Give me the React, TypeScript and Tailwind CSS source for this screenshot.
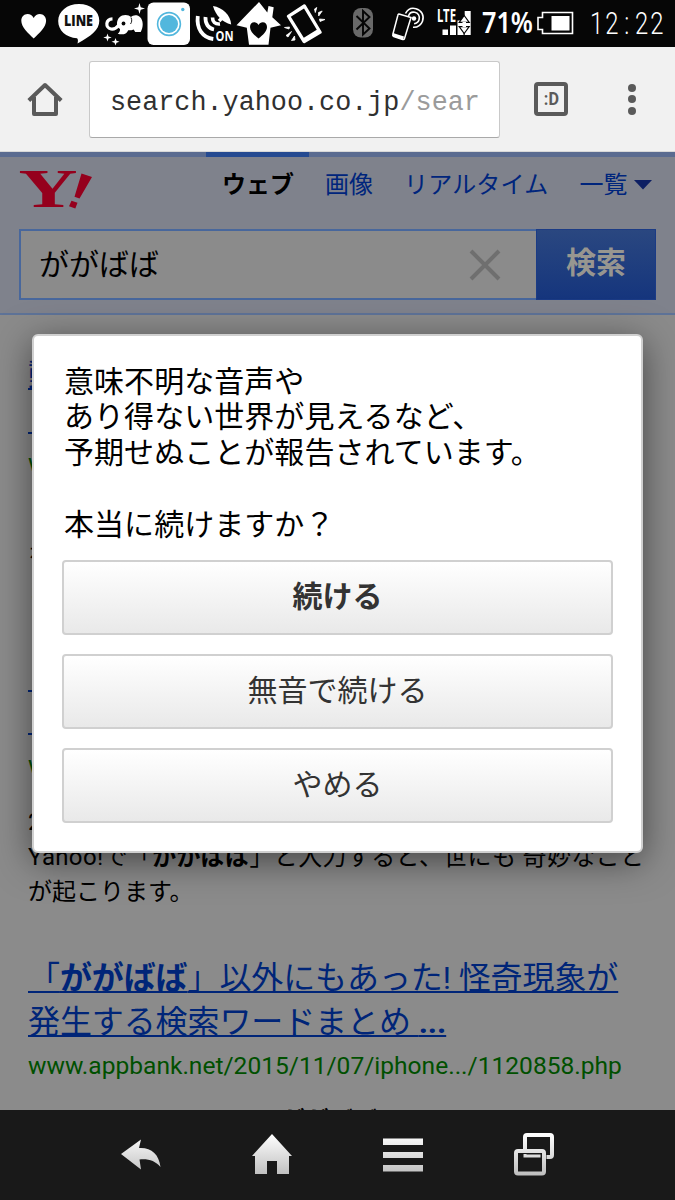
import type { ReactNode } from "react";

const JP = "font-[Roboto,'Noto_Sans_CJK_JP',sans-serif]";

// status bar icons share the bar's own coordinates, x is where the slice starts
function Glyph({ x, w, children }: { x: number; w: number; children: ReactNode }) {
  return (
    <svg width={w} height={47} viewBox={`${x} 0 ${w} 47`} className="shrink-0 overflow-visible" fill="#fff">
      {children}
    </svg>
  );
}

function StatusBar() {
  return (
    <div className="flex h-[47px] shrink-0 items-center bg-[#060606] pl-4 text-white">
      <Glyph x={16} w={38}>
        <path d="M33.7 38.5C28 33 21.3 27 21.3 20.7c0-3.9 2.8-6.7 6.2-6.7 2.7 0 4.8 1.5 6.2 4 1.4-2.5 3.5-4 6.2-4 3.4 0 6.2 2.8 6.2 6.7 0 6.3-6.7 12.3-12.4 17.8z" />
      </Glyph>
      <Glyph x={54} w={50}>
        <path d="M79 4c11.5 0 20.3 7.200 20.3 16.800C99.300 30 91 36 77.500 43.500c.7-2.500.6-4.500-.5-5.200C66 37.500 58.200 30.500 58.200 21 58.200 11.500 67 4 79 4z" />
        <text x={78.500} y={26} fill="#111" fontSize={15} fontWeight={800} textLength={29} lengthAdjust="spacingAndGlyphs" textAnchor="middle" fontFamily="Open Sans, sans-serif">LINE</text>
      </Glyph>
      <Glyph x={104} w={43}>
        <path d="M112.500 18.800c-7 .2-7.500 9-1.500 10.200 4 .7 6-1.500 8-4" fill="none" stroke="#fff" strokeWidth={3.200} />
        <path d="M117 23c.5-5 3.500-8 8.500-8 2.500 0 4.200.7 5.500 2 1.500-1.500 3.500-2.200 5.700-1.700 4 .9 6 5 6 9.200 0 3-.8 5-2 7.500h-5.500l-1.500-2.500c-2 .8-4 1-5.500.8-1 2.200-2.500 3.500-4.500 3.900-2 .3-4 .2-6-.5 1.800-1.200 2.500-2.800 2.300-4.700-2-1-3.200-3.300-3-6z" />
        <path d="M131 17.500c1.200 2.500.8 4.800-.5 6.500" fill="none" stroke="#060606" strokeWidth={0.900} />
        <circle cx={123.500} cy={23.500} r={1.900} fill="#060606" />
        <path d="M139.500 3l1.200 4.300 4.300 1.200-4.300 1.200-1.200 4.300-1.200-4.300-4.300-1.200 4.300-1.200zM107.500 33.500l1 3 3.200 1-3.200 1-1 3-1-3-3.200-1 3.200-1zM115.500 38l1 2.800 3 1-3 1-1 2.600-1-2.600-3-1 3-1z" />
      </Glyph>
      <Glyph x={147} w={44}>
        <rect x={147.500} y={2.500} width={42.500} height={42.500} rx={6} />
        <circle cx={169} cy={24} r={11.400} fill="none" stroke="#52b7dd" strokeWidth={1.600} />
        <circle cx={169} cy={24} r={9} fill="#52b7dd" />
        <circle cx={182.800} cy={9.500} r={1.700} fill="#52b7dd" />
      </Glyph>
      <Glyph x={191} w={44}>
        <path d="M213 6c9.500 1.500 17.500 9 18.200 18.500C222.500 22.500 215.500 15.500 213 6z" />
        <path d="M212.500 17.500c0 4 2.500 7 7.500 6.500M219 21l3-3" fill="none" stroke="#fff" strokeWidth={3.600} />
        <path d="M205.500 17c-.5 6.500 3 11.500 8.500 12.500M197.800 16c-1.500 12.500 4.500 21.500 15.500 23" fill="none" stroke="#fff" strokeWidth={3.800} />
        <text x={215.500} y={41.200} fontSize={14.500} fontWeight={700} textLength={18} lengthAdjust="spacingAndGlyphs" fontFamily="Open Sans, sans-serif">ON</text>
      </Glyph>
      <Glyph x={235} w={48}>
        <path d="M259 2l8.300 10.500L268.500 6l5.200 1.200-1.400 10 8.700 8-10.500 2.500-2 17h-19.500l-2.200-17L236.500 25.200z" />
        <path d="M258.500 38.500c-4.500-3.500-8.500-7.300-8.500-11.500 0-2.800 1.800-4.800 4.200-4.800 1.900 0 3.300 1 4.300 2.800 1-1.800 2.400-2.800 4.300-2.800 2.400 0 4.200 2 4.200 4.800 0 4.200-4 8-8.500 11.500z" fill="#060606" />
      </Glyph>
      <Glyph x={283} w={60}>
        <path fillRule="evenodd" d="M287.500 15l16-10.500c.8-.5 1.700-.3 2.200.5l15.800 26.500c.5.9.3 1.600-.5 2.100l-16 9.400c-.8.500-1.700.2-2.200-.6l-15.700-25.400c-.5-.8-.4-1.500.4-2zM290.800 16.800l13 21 13-8-12.800-21.300z" />
        <path d="M314.500 9l2.300-1.500-1.500 5zM318.500 12.500l3.700-1.500-3.500 5zM319.500 19l5.500.5-5 2zM289.500 27l-5 .5 4.500 1.500zM291.500 31.500l-5.500 4 2 1.500zM294.500 36l-3 4.500 3.500-.5z" stroke="#fff" strokeWidth={0.800} />
      </Glyph>
      <div className="flex-1" />
      <Glyph x={350} w={30}>
        <rect x={353} y={8} width={20} height={29.500} rx={8} fill="#696969" />
        <path d="M356.500 16l13 12.500-6.500 6V11l6.500 6-13 12.500" fill="none" stroke="#060606" strokeWidth={1.900} />
      </Glyph>
      <Glyph x={380} w={54}>
        <circle cx={414} cy={18.500} r={2.200} />
        <path d="M408.500 16c1-3 3.500-4.300 6.300-3.700 3.500.7 5.200 3.800 4.300 7.200-.7 2.500-2.700 4-5 4.300M405.500 13.500c2-4 6-6 10.500-4.800 5.500 1.500 8.500 7 6.500 12.500-1.500 4-5 6.200-9.500 6" fill="none" stroke="#fff" strokeWidth={1.600} />
        <path d="M399 14l12 3.500-6.500 21c-.3 1-.8 1.200-1.800 1l-9-3c-1-.4-1.200-1-.9-2l5-19c.2-1 .5-1.700 1.200-1.500z" fill="#060606" stroke="#fff" strokeWidth={1.500} />
        <path d="M393 33l11 3.500-1 3.500-10.500-4z" />
      </Glyph>
      <Glyph x={434} w={46}>
        <text x={437} y={21.500} fontSize={17} fontWeight={700} textLength={19} lengthAdjust="spacingAndGlyphs" fontFamily="Noto Sans, sans-serif">LTE</text>
        <path d="M442.500 29.500h5.500v5.500h-5.500zM450 25.500h6v9.500h-6zM457.500 20.500h6v14.500h-6zM464.700 11h6v24h-6z" />
        <path d="M464.200 15.500l5 6.800h-10zM464.200 33.500l5-6.800h-10z" stroke="#060606" strokeWidth={1.200} />
        <path d="M462.500 22h3.500v5h-3.500z" />
      </Glyph>
      <div className="w-[56px]">
        <span className="ml-[2px] inline-block origin-left scale-x-[.87] font-[Noto_Sans,sans-serif] text-[29px] leading-none font-semibold whitespace-nowrap">71%</span>
      </div>
      <Glyph x={536} w={42}>
        <path d="M542.500 12.500h30v21h-30v-4h-4.500v-12h4.500z" fill="none" stroke="#fff" strokeWidth={1.600} />
        <rect x={551.500} y={16} width={18} height={14.500} />
      </Glyph>
      <div className="mt-[2px] ml-[12px] w-[85px]">
        <span className="inline-block origin-left scale-x-[.77] font-[Roboto,sans-serif] text-[31px] leading-none font-light tracking-[2.5px] whitespace-nowrap">
          12<span className="mx-[5px]">:</span>22
        </span>
      </div>
    </div>
  );
}

function BrowserBar() {
  return (
    <div className="flex h-[105px] shrink-0 items-center border-b border-[#d8d8d8] bg-[#f1f1f1] pl-[27px]">
      <svg width={36} height={36} viewBox="0 0 36 36" fill="none" stroke="#5a5a5a" strokeWidth={4} strokeLinecap="butt" strokeLinejoin="round">
        <path d="M1.800 19.500L18 4 34.200 19.500M7 16V33h22V16" />
      </svg>
      <div className="ml-[26px] flex h-[77px] w-[411px] items-center rounded-[3px] border border-[#c9c9c9] border-b-[#a9a9a9] bg-white pt-[9px] pl-[20px] font-['Liberation_Mono',monospace] text-[26.8px] text-[#303030]">
        <span>search.yahoo.co.jp</span>
        <span className="text-[#9b9b9b]">/sear</span>
      </div>
      <div className="ml-[34px] flex size-[34px] items-center justify-center rounded-[4px] border-4 border-[#5a5a5a]">
        <span className="scale-x-90 font-[Roboto,sans-serif] text-[18px] leading-none font-bold text-[#5a5a5a]">:D</span>
      </div>
      <div className="ml-[60px] flex flex-col gap-[3.500px]">
        <i className="size-2 rounded-full bg-[#5a5a5a]" />
        <i className="size-2 rounded-full bg-[#5a5a5a]" />
        <i className="size-2 rounded-full bg-[#5a5a5a]" />
      </div>
    </div>
  );
}

function SearchHeader() {
  return (
    <div className="h-[163px] border-b-2 border-[#5e7398] bg-[#7f828c]">
      <div className="h-[5px] bg-[#5a6b90]">
        <div className="ml-[206px] h-full w-[103px] bg-[#254a91]" />
      </div>
      <div className="flex h-[72px] items-start pl-[18px]">
        <svg width={76} height={60} viewBox="18 0 76 60" className="overflow-visible" fill="#95001d" fontFamily="Liberation Serif, serif" fontWeight={700}>
          <text x={18.500} y={50} fontSize={54} textLength={59} lengthAdjust="spacingAndGlyphs">Y</text>
          <path d="M81.500 16.500l10.500 3.500-12.500 21.500-5-1.700zM71.500 43.700l6 2-2.200 5.800-6.300-2.300z" />
        </svg>
        <div className="ml-[128px] flex gap-[31px] pt-[10px] text-[24px] leading-[36px] text-[#00257c]">
          <span className="font-bold text-black">ウェブ</span>
          <span>画像</span>
          <span className="tracking-[.2px]">リアルタイム</span>
          <span className="flex items-center gap-[7px]">
            一覧
            <svg width={18} height={10} viewBox="0 0 18 10" fill="#0d1f63"><path d="M0 0h18L9 9.500z" /></svg>
          </span>
        </div>
      </div>
      <div className="mx-[19px] flex h-[71px]">
        <div className="flex flex-1 items-center justify-between border-2 border-r-0 border-[#48679c] bg-[#8b8b8b] pr-[35px] pl-[18px]">
          <span className="text-[30px] leading-none text-black">ががばば</span>
          <svg width={32} height={32} viewBox="0 0 32 32" stroke="#6f6f6f" strokeWidth={4}>
            <path d="M2 2l28 28M30 2L2 30" />
          </svg>
        </div>
        <div className="flex w-[120px] items-center justify-center border border-[#1b3b85] bg-linear-to-b from-[#2a4780] to-[#15357d] pb-1 text-[30px] leading-none font-bold text-[#979690]">
          検索
        </div>
      </div>
    </div>
  );
}

type Result = { title: ReactNode[]; url: string; lines: ReactNode[] };

const results: Result[] = [
  {
    title: ["動画", "ラ"],
    url: "www",
    lines: ["「", "を", "ま"],
  },
  {
    title: ["「", "ラ"],
    url: "www",
    lines: [
      "2015",
      <span className="tracking-[.34px]">Yahoo!で「<b>ががばば</b>」と入力すると、世にも 奇妙なこと</span>,
      "が起こります。",
    ],
  },
  {
    title: [
      <>「<b>ががばば</b>」以外にもあった! 怪奇現象が</>,
      <>発生する検索ワードまとめ <b>...</b></>,
    ],
    url: "www.appbank.net/2015/11/07/iphone.../1120858.php",
    lines: [<b className="-mt-[3px] ml-[253px] block">ががばば</b>],
  },
];

function ResultItem({ title, url, lines }: Result) {
  return (
    <div className="mb-[47px] pl-[28px] whitespace-nowrap">
      {title.map((line, i) => (
        <p key={i} className="h-[43.500px] text-[32px] leading-[43.500px] tracking-[-.1px] text-[#002578] underline decoration-2 underline-offset-2">{line}</p>
      ))}
      <p className="mt-[4px] h-[36px] text-[24.550px] leading-[36px] text-[#005000]">{url}</p>
      <div className="mt-[22.500px] text-[24px] leading-[35px] text-black">
        {lines.map((line, i) => (
          <p key={i} className="h-[35px]">{line}</p>
        ))}
      </div>
    </div>
  );
}

function ConfirmDialog() {
  return (
    <div className="absolute top-[334px] left-8 h-[519px] w-[611px] rounded-[6px] border-2 border-[#d0d0d0] bg-white px-[28px] pt-[27.500px] shadow-[0_8px_36px_rgba(0,0,0,0.5)]">
      <p className="pl-[2px] text-[30px] leading-[35.800px] tracking-[.05px] whitespace-nowrap text-black">
        意味不明な音声や<br />
        あり得ない世界が見えるなど、<br />
        予期せぬことが報告されています。<br />
        <br />
        本当に続けますか？
      </p>
      <div className="mt-[17.500px] flex flex-col gap-[19px] text-[30px] text-[#333]">
        {["続ける", "無音で続ける", "やめる"].map((label, i) => (
          <button
            key={label}
            className={`h-[75px] rounded-[4px] border-2 border-[#d0d0d0] bg-linear-to-b from-white to-[#e9e9e9] leading-none ${i === 0 ? "font-bold" : ""}`}
          >
            {label}
          </button>
        ))}
      </div>
    </div>
  );
}

function NavBar() {
  return (
    <div className="flex h-[90px] shrink-0 items-center gap-[91px] bg-[#191919] pl-[121px]">
      <svg width={0} height={0} className="absolute">
        <linearGradient id="metal" gradientUnits="userSpaceOnUse" x1={0} y1={0} x2={0} y2={42}>
          <stop offset="0" stopColor="#fff" />
          <stop offset="1" stopColor="#bdbdbd" />
        </linearGradient>
      </svg>
      <svg width={40} height={42} viewBox="0 0 40 42" fill="url(#metal)">
        <path d="M20 5.500l-2 8.500c12-.8 20 6 21.500 19-5.500-6-11.500-8.300-21-7.500L20 35.500 0 20z" />
      </svg>
      <svg width={40} height={42} viewBox="0 0 40 42" fill="url(#metal)">
        <path d="M20 0l20 22h-3V40H25V27H15V40H3V22H0z" />
      </svg>
      <svg width={40} height={42} viewBox="0 0 40 42" fill="url(#metal)">
        <path d="M0 4.500h40v6.500H0zM0 18h40v6H0zM0 31h40v6.500H0z" />
      </svg>
      <svg width={41} height={42} viewBox="0 0 41 42" fill="none" stroke="url(#metal)" strokeWidth={4} className="overflow-visible">
        <rect x={11} y={1} width={27} height={22} rx={2} />
        <path d="M0 19a4 4 0 0 1 4-4h24.500a4 4 0 0 1 4 4v22H0z" fill="#191919" stroke="none" />
        <path d="M11 20v2h15.500" strokeWidth={3} />
        <rect x={2} y={17} width={28} height={22.500} rx={2} />
      </svg>
    </div>
  );
}

export default function App() {
  return (
    <div className={`relative flex h-[1200px] w-[675px] flex-col overflow-hidden ${JP}`}>
      <StatusBar />
      <BrowserBar />
      <main className="min-h-0 flex-1 overflow-hidden bg-[#8b8b8b]">
        <SearchHeader />
        <div className="pt-[39px]">
          {results.map((r, i) => (
            <ResultItem key={i} {...r} />
          ))}
        </div>
      </main>
      <NavBar />
      <ConfirmDialog />
    </div>
  );
}
